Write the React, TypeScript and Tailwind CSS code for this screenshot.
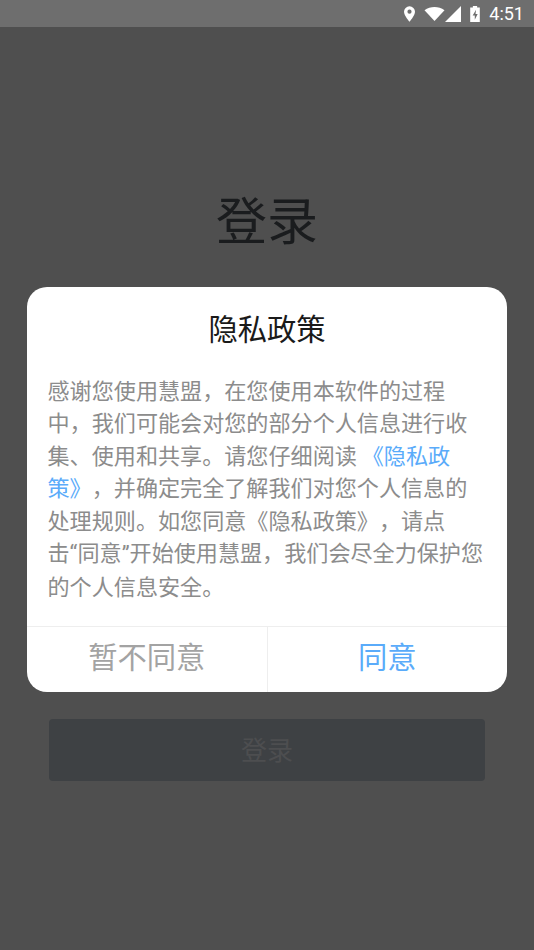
export default function App() {
  const font = { fontFamily: '"Noto Sans CJK SC", sans-serif' };
  const roboto = { fontFamily: '"Roboto", sans-serif' };
  return (
    <div className="relative h-[950px] w-[534px] overflow-hidden bg-[#4f4f4f] [text-spacing-trim:space-all]" style={font}>
      <div className="flex h-[27px] items-center justify-end bg-[#6e6e6e] pr-[10px]">
        <svg width="11" height="16" viewBox="2 1 10 14" className="mr-[9px]">
          <path fill="#fff" fillRule="evenodd" d="M7 1a5 5 0 0 0-5 5c0 3.600 5 9 5 9s5-5.400 5-9a5 5 0 0 0-5-5Zm0 6.800a1.900 1.900 0 1 1 0-3.800 1.900 1.900 0 0 1 0 3.800Z" />
        </svg>
        <svg width="21" height="16" viewBox="0 1 21 14">
          <path fill="#fff" d="M0.500 4.200C3.500 1.900 7 1 10.500 1s7 .9 10 3.200L10.500 15Z" />
        </svg>
        <svg width="16" height="16" viewBox="0 0 16 16" className="mr-[9px]">
          <path fill="#fff" d="M16 0v16H0Z" />
        </svg>
        <svg width="10" height="16" viewBox="1 1 9 15" className="mr-[9px]">
          <path fill="#fff" fillRule="evenodd" d="M3.500 1h4v1.500H10V16H1V2.500h2.500ZM6.500 4.500 3.300 10h2v3.800L8 8.500H6Z" />
        </svg>
        <span className="text-[18px] leading-none text-white" style={roboto}>4:51</span>
      </div>

      <h1 className="mt-[161px] text-center text-[51px] font-normal leading-[60px] text-[#1a1c1e]">登录</h1>

      <div className="mx-[49px] mt-[471px] flex h-[62px] items-center justify-center rounded-[4px] bg-[#3e4144] pb-[3px] text-[26px] text-[#4d4e50]">登录</div>

      <div className="absolute left-[27px] top-[287px] flex h-[405px] w-[480px] flex-col rounded-[20px] bg-white">
        <h2 className="mt-[19px] text-center text-[29.3px] font-normal leading-[42px] text-[#1a1a1a]">隐私政策</h2>
        <div className="mt-[25px] whitespace-nowrap pl-[20.5px] text-[22.1px] leading-[32.4px] text-[#8c8c8c]">
          <div>感谢您使用慧盟，在您使用本软件的过程</div>
          <div>中，我们可能会对您的部分个人信息进行收</div>
          <div>集、使用和共享。请您仔细阅读 <span className="text-[#5aabfa]">《隐私政</span></div>
          <div><span className="text-[#5aabfa]">策》</span>，并确定完全了解我们对您个人信息的</div>
          <div>处理规则。如您同意《隐私政策》，请点</div>
          <div>击<span style={roboto}>“</span>同意<span style={roboto}>”</span>开始使用慧盟，我们会尽全力保护您</div>
          <div>的个人信息安全。</div>
        </div>
        <div className="mt-auto flex h-[66px] border-t border-[#eeeeee]">
          <div className="flex flex-1 items-center justify-center border-r border-[#eeeeee] pb-[8px] text-[29.3px] text-[#a3a3a3]">暂不同意</div>
          <div className="flex flex-1 items-center justify-center pb-[8px] text-[29.3px] text-[#5aabfa]">同意</div>
        </div>
      </div>
    </div>
  );
}
